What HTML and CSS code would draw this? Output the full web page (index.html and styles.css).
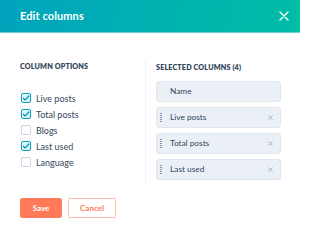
FILE: index.html
```html
<!DOCTYPE html>
<html>
<head>
<meta charset="utf-8">
<link rel="stylesheet" href="styles.css">
</head>
<body>
<div class="modal">
  <header class="modal-header">
    <h1 class="modal-title">Edit columns</h1>
    <button class="close-btn" aria-label="Close">
      <svg width="10" height="10" viewBox="0 0 10 10"><path d="M1 1 L9 9 M9 1 L1 9" stroke="#fff" stroke-width="1.4" stroke-linecap="round" fill="none"/></svg>
    </button>
  </header>
  <div class="modal-body">
    <section class="col-options">
      <h2 class="section-title">COLUMN OPTIONS</h2>
      <ul class="option-list">
        <li class="option"><span class="checkbox checked"><svg width="8" height="8" viewBox="0 0 8 8"><path d="M1.3 4.2 L3.2 6 L6.8 2" stroke="#00a4bd" stroke-width="1.3" fill="none" stroke-linecap="round" stroke-linejoin="round"/></svg></span>Live posts</li>
        <li class="option"><span class="checkbox checked"><svg width="8" height="8" viewBox="0 0 8 8"><path d="M1.3 4.2 L3.2 6 L6.8 2" stroke="#00a4bd" stroke-width="1.3" fill="none" stroke-linecap="round" stroke-linejoin="round"/></svg></span>Total posts</li>
        <li class="option"><span class="checkbox"></span>Blogs</li>
        <li class="option"><span class="checkbox checked"><svg width="8" height="8" viewBox="0 0 8 8"><path d="M1.3 4.2 L3.2 6 L6.8 2" stroke="#00a4bd" stroke-width="1.3" fill="none" stroke-linecap="round" stroke-linejoin="round"/></svg></span>Last used</li>
        <li class="option"><span class="checkbox"></span>Language</li>
      </ul>
    </section>
    <section class="col-selected">
      <h2 class="section-title">SELECTED COLUMNS (4)</h2>
      <ul class="selected-list">
        <li class="sel-item fixed"><span class="sel-label">Name</span></li>
        <li class="sel-item"><span class="handle"></span><span class="sel-label">Live posts</span><span class="remove"><svg width="5" height="5" viewBox="0 0 5 5"><path d="M0.5 0.5 L4.5 4.5 M4.5 0.5 L0.5 4.5" stroke="#99afc4" stroke-width="1" fill="none"/></svg></span></li>
        <li class="sel-item"><span class="handle"></span><span class="sel-label">Total posts</span><span class="remove"><svg width="5" height="5" viewBox="0 0 5 5"><path d="M0.5 0.5 L4.5 4.5 M4.5 0.5 L0.5 4.5" stroke="#99afc4" stroke-width="1" fill="none"/></svg></span></li>
        <li class="sel-item"><span class="handle"></span><span class="sel-label">Last used</span><span class="remove"><svg width="5" height="5" viewBox="0 0 5 5"><path d="M0.5 0.5 L4.5 4.5 M4.5 0.5 L0.5 4.5" stroke="#99afc4" stroke-width="1" fill="none"/></svg></span></li>
      </ul>
    </section>
  </div>
  <footer class="modal-footer">
    <button class="btn btn-primary">Save</button>
    <button class="btn btn-secondary">Cancel</button>
  </footer>
</div>
</body>
</html>
```

FILE: styles.css
```css
* { box-sizing: border-box; }
html, body { margin: 0; padding: 0; background: #fff; }
body {
  font-family: "Lato", "Noto Sans", sans-serif;
  color: #33475b;
  width: 300px;
  height: 229px;
  overflow: hidden;
}
.modal-header {
  height: 33px;
  background: linear-gradient(100deg, #00a4bd 0%, #00bda5 100%);
  border-bottom: 1px solid #6fd0da;
  display: flex;
  align-items: center;
  justify-content: space-between;
  padding: 0 10px 1px 20px;
}
.modal-title {
  margin: 0;
  color: #fff;
  font-size: 11px;
  font-weight: 700;
  letter-spacing: 0.1px;
}
.close-btn {
  background: none;
  border: 0;
  padding: 0;
  width: 12px;
  height: 12px;
  display: flex;
  align-items: center;
  justify-content: center;
}
.modal-body {
  display: grid;
  grid-template-columns: 145px 1fr;
  margin-top: 27px;
}
.col-options {
  padding: 2px 0 0 20px;
}
.col-selected {
  border-left: 1px solid #eef1f5;
  padding: 3px 19px 5px 10px;
}
.section-title {
  margin: 0;
  font-size: 7.2px;
  font-weight: 800;
  letter-spacing: 0.15px;
  line-height: 10px;
  color: #33475b;
}
.option-list, .selected-list {
  list-style: none;
  margin: 0;
  padding: 0;
}
.option-list { margin-top: 18px; margin-left: 1px; }
.option {
  display: flex;
  align-items: center;
  height: 16px;
  font-size: 9px;
  color: #33475b;
}
.checkbox {
  width: 10px;
  height: 10px;
  border: 1px solid #cbd6e2;
  border-radius: 2px;
  background: #fff;
  margin-right: 5px;
  display: flex;
  align-items: center;
  justify-content: center;
  flex: none;
}
.checkbox.checked {
  border-color: #00a4bd;
  background: #e5f8f6;
}
.selected-list {
  margin-top: 8px;
  display: flex;
  flex-direction: column;
  gap: 5.5px;
}
.sel-item {
  height: 20.5px;
  background: #eaf0f6;
  border: 1px solid #dfe6ee;
  border-radius: 3px;
  display: flex;
  align-items: center;
  padding: 0 7px 0 13px;
  font-size: 8.3px;
  color: #33475b;
  position: relative;
}
.handle {
  position: absolute;
  left: 3px;
  top: 4.5px;
  width: 2px;
  height: 10px;
  background: repeating-linear-gradient(to bottom, #7c98b6 0 1px, transparent 1px 2px);
}
.sel-label { flex: 1; }
.remove {
  display: flex;
  align-items: center;
}
.modal-footer {
  display: flex;
  gap: 6px;
  padding: 13px 0 0 20px;
}
.btn {
  height: 20px;
  border-radius: 2px;
  font-family: "Lato", "Noto Sans", sans-serif;
  font-size: 8px;
  font-weight: 700;
  padding: 0;
  cursor: pointer;
}
.btn-primary {
  width: 42px;
  background: #ff7a59;
  border: 1px solid #ff7a59;
  color: #fff;
}
.btn-secondary {
  width: 48px;
  background: #fff;
  border: 1px solid #ffbcac;
  color: #ff7a59;
}
```
